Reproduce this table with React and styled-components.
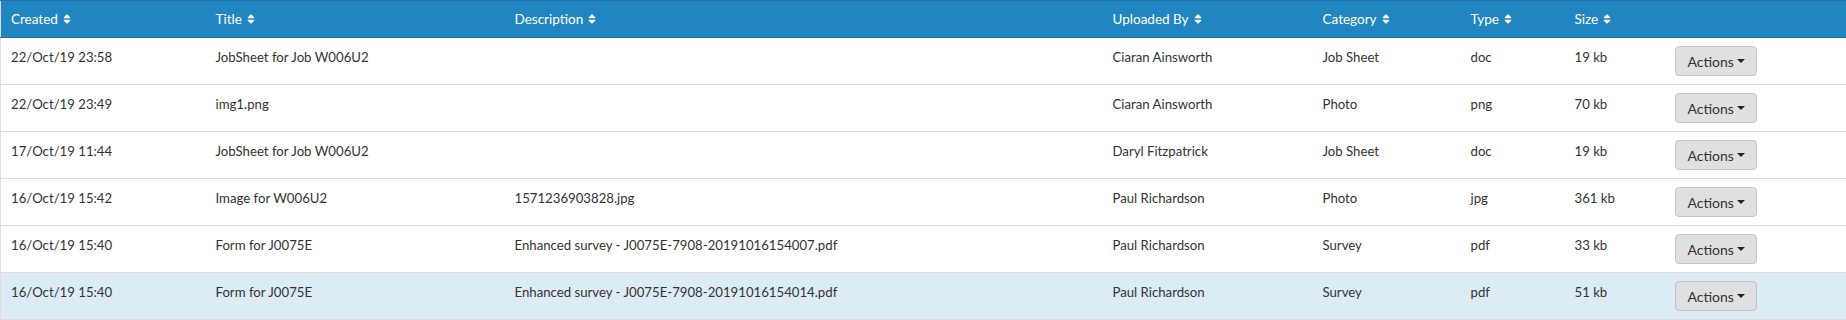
import React from "react";
import styled, { createGlobalStyle } from "styled-components";
import { FaSort } from "react-icons/fa";

const GlobalStyle = createGlobalStyle`
  body {
    margin: 0;
    background: #fff;
    font-family: Lato, "Open Sans", Arial, sans-serif;
    font-size: 13px;
    color: #333;
  }
`;

const Table = styled.table`
  width: 1846px;
  table-layout: fixed;
  border-collapse: collapse;
  border: 1px solid #ddd;
  border-top: 0;
`;

const HeadRow = styled.tr`
  background: #2185c2;
`;

const Th = styled.th`
  height: 36px;
  padding: 0 10px;
  text-align: left;
  font-weight: normal;
  font-size: 13.5px;
  color: #fff;
  line-height: 20px;
  border-top: 1px solid #1c74aa;
  border-bottom: 1px solid #1c74aa;
  white-space: nowrap;

  svg {
    margin-left: 5px;
    vertical-align: -1px;
    width: 8px;
    height: 12px;
  }
`;

const Row = styled.tr`
  background: ${(p) => (p.$active ? "#ddebf4" : "#fff")};
  border-top: 1px solid #ddd;
`;

const Td = styled.td`
  height: 46px;
  box-sizing: border-box;
  padding: 10px 10px 0;
  vertical-align: top;
  font-size: 13.2px;
  line-height: 18px;
  white-space: nowrap;
  overflow: hidden;
`;

const ActionCell = styled.td`
  padding: 8px 10px;
  vertical-align: top;
`;

const ActionButton = styled.button`
  display: inline-flex;
  align-items: center;
  gap: 3px;
  height: 30px;
  padding: 0 11px 0 12px;
  background: #e0e0e0;
  border: 1px solid #c4c4c4;
  border-radius: 4px;
  font-family: inherit;
  font-size: 14px;
  color: #333;
`;

const Caret = styled.span`
  width: 0;
  height: 0;
  border-left: 4px solid transparent;
  border-right: 4px solid transparent;
  border-top: 4px solid #222;
`;

const columns = [
  { label: "Created", width: 205 },
  { label: "Title", width: 299 },
  { label: "Description", width: 598 },
  { label: "Uploaded By", width: 210 },
  { label: "Category", width: 148 },
  { label: "Type", width: 104 },
  { label: "Size", width: 100 },
  { label: "", width: 182 },
];

const rows = [
  ["22/Oct/19 23:58", "JobSheet for Job W006U2", "", "Ciaran Ainsworth", "Job Sheet", "doc", "19 kb"],
  ["22/Oct/19 23:49", "img1.png", "", "Ciaran Ainsworth", "Photo", "png", "70 kb"],
  ["17/Oct/19 11:44", "JobSheet for Job W006U2", "", "Daryl Fitzpatrick", "Job Sheet", "doc", "19 kb"],
  ["16/Oct/19 15:42", "Image for W006U2", "1571236903828.jpg", "Paul Richardson", "Photo", "jpg", "361 kb"],
  ["16/Oct/19 15:40", "Form for J0075E", "Enhanced survey - J0075E-7908-20191016154007.pdf", "Paul Richardson", "Survey", "pdf", "33 kb"],
  ["16/Oct/19 15:40", "Form for J0075E", "Enhanced survey - J0075E-7908-20191016154014.pdf", "Paul Richardson", "Survey", "pdf", "51 kb"],
];

export default function App() {
  return (
    <>
      <GlobalStyle />
      <Table>
        <colgroup>
          {columns.map((c, i) => (
            <col key={i} style={{ width: c.width }} />
          ))}
        </colgroup>
        <thead>
          <HeadRow>
            {columns.map((c, i) => (
              <Th key={i}>
                {c.label}
                {c.label && <FaSort />}
              </Th>
            ))}
          </HeadRow>
        </thead>
        <tbody>
          {rows.map((r, i) => (
            <Row key={i} $active={i === rows.length - 1}>
              {r.map((cell, j) => (
                <Td key={j}>{cell}</Td>
              ))}
              <ActionCell>
                <ActionButton>
                  Actions
                  <Caret />
                </ActionButton>
              </ActionCell>
            </Row>
          ))}
        </tbody>
      </Table>
    </>
  );
}
